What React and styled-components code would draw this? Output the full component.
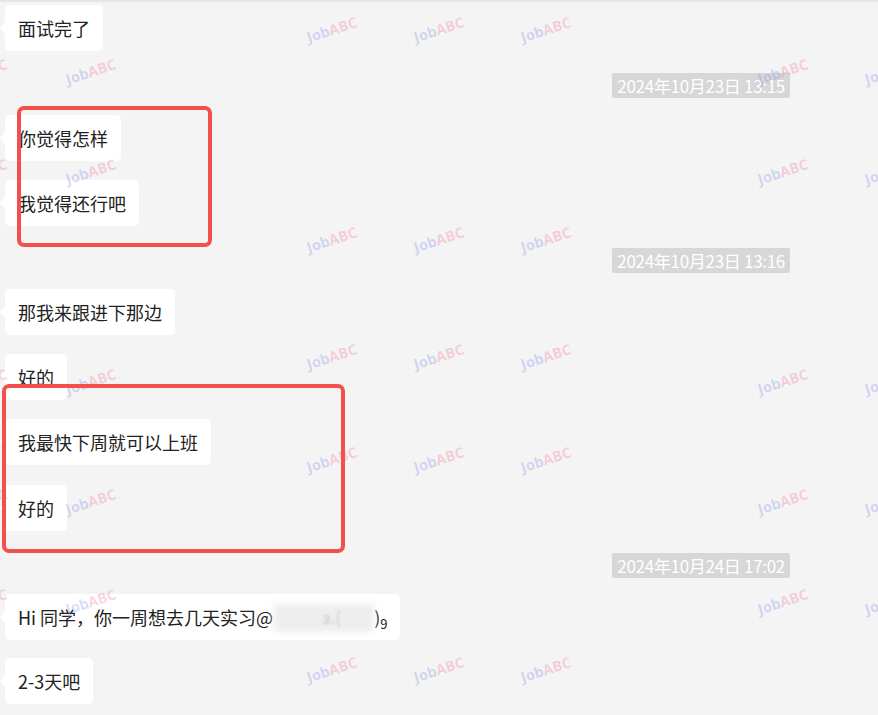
import React from "react";
import styled, { createGlobalStyle } from "styled-components";

const GlobalStyle = createGlobalStyle`
  html, body {
    margin: 0;
    padding: 0;
    background: #f4f4f4;
  }
`;

const ChatWindow = styled.div`
  position: relative;
  width: 878px;
  height: 715px;
  overflow: hidden;
  background: #f4f4f4;
  border-top: 2px solid #e6e6e6;
  box-sizing: border-box;
  font-family: "Noto Sans CJK SC", "Noto Sans", sans-serif;
  padding-top: 3px;
`;

const Row = styled.div`
  display: flex;
  justify-content: ${(p) => (p.$time ? "flex-end" : "flex-start")};
  margin-top: ${(p) => p.$gap || 0}px;
  padding: ${(p) => (p.$time ? "0 88px 0 0" : "0 0 0 5px")};
`;

const Bubble = styled.div`
  position: relative;
  background: #ffffff;
  border-radius: 5px;
  height: 46px;
  line-height: 46px;
  padding: 0 13px;
  font-size: 18px;
  color: #222222;
  white-space: nowrap;
  display: flex;
  align-items: center;

  &::before {
    content: "";
    position: absolute;
    left: -5px;
    top: 50%;
    margin-top: -6px;
    border-top: 6px solid transparent;
    border-bottom: 6px solid transparent;
    border-right: 5px solid #ffffff;
  }
`;

const Stamp = styled.div`
  background: #d7d7d7;
  color: #ffffff;
  font-size: 17px;
  letter-spacing: -0.3px;
  height: 25px;
  line-height: 25px;
  padding: 0 5px;
  border-radius: 2px;
  white-space: nowrap;
`;

const Blurred = styled.span`
  position: relative;
  display: inline-block;
  width: 100px;
  height: 30px;
  margin: 0 0 0 1px;

  &::before {
    content: "";
    position: absolute;
    inset: 2px 0 0 0;
    background: #eeeeee;
    filter: blur(3px);
  }
`;

const Ghost = styled.span`
  position: absolute;
  left: 48px;
  top: 0;
  line-height: 30px;
  font-size: 17px;
  color: #cacaca;
  filter: blur(0.8px);
`;

const Sub = styled.span`
  font-size: 13px;
  align-self: flex-end;
  line-height: 32px;
`;

const Highlight = styled.div`
  position: absolute;
  left: ${(p) => p.$x}px;
  top: ${(p) => p.$y}px;
  width: ${(p) => p.$w}px;
  height: ${(p) => p.$h}px;
  border: 4px solid #f44f4d;
  border-radius: 7px;
  box-sizing: border-box;
  pointer-events: none;
`;

const Mark = styled.div`
  position: absolute;
  left: ${(p) => p.$x - 27}px;
  top: ${(p) => p.$y - 10}px;
  transform: rotate(-18deg);
  font-family: "Open Sans", "Noto Sans", sans-serif;
  font-weight: 700;
  font-size: 14.5px;
  line-height: 20px;
  white-space: nowrap;
  pointer-events: none;

  b {
    font-weight: 700;
    color: rgba(120, 128, 235, 0.28);
  }
  i {
    font-style: normal;
    color: rgba(240, 90, 130, 0.26);
  }
`;

const sideRows = [70, 170, 380, 500, 600];
const midRows = [28, 238, 355, 458, 668];
const marks = [
  ...sideRows.flatMap((y) => [-17, 92, 784, 891].map((x) => ({ x, y }))),
  ...midRows.flatMap((y) => [333, 440, 547].map((x) => ({ x, y }))),
];

const feed = [
  { text: "面试完了", gap: 0 },
  { time: "2024年10月23日 13:15", gap: 22 },
  { text: "你觉得怎样", gap: 17 },
  { text: "我觉得还行吧", gap: 19 },
  { time: "2024年10月23日 13:16", gap: 22 },
  { text: "那我来跟进下那边", gap: 16 },
  { text: "好的", gap: 19 },
  { text: "我最快下周就可以上班", gap: 19 },
  { text: "好的", gap: 20 },
  { time: "2024年10月24日 17:02", gap: 22 },
  { hi: true, gap: 16 },
  { text: "2-3天吧", gap: 18 },
];

export default function App() {
  return (
    <>
      <GlobalStyle />
      <ChatWindow>
        {feed.map((m, i) =>
          m.time ? (
            <Row key={i} $time $gap={m.gap}>
              <Stamp>{m.time}</Stamp>
            </Row>
          ) : (
            <Row key={i} $gap={m.gap}>
              {m.hi ? (
                <Bubble>
                  Hi 同学，你一周想去几天实习@
                  <Blurred>
                    <Ghost>ɜ.(</Ghost>
                  </Blurred>
                  )<Sub>9</Sub>
                </Bubble>
              ) : (
                <Bubble>{m.text}</Bubble>
              )}
            </Row>
          )
        )}

        {marks.map((m, i) => (
          <Mark key={"w" + i} $x={m.x} $y={m.y}>
            <b>Job</b>
            <i>ABC</i>
          </Mark>
        ))}

        <Highlight $x={17} $y={104} $w={195} $h={141} />
        <Highlight $x={2} $y={382} $w={343} $h={169} />
      </ChatWindow>
    </>
  );
}
